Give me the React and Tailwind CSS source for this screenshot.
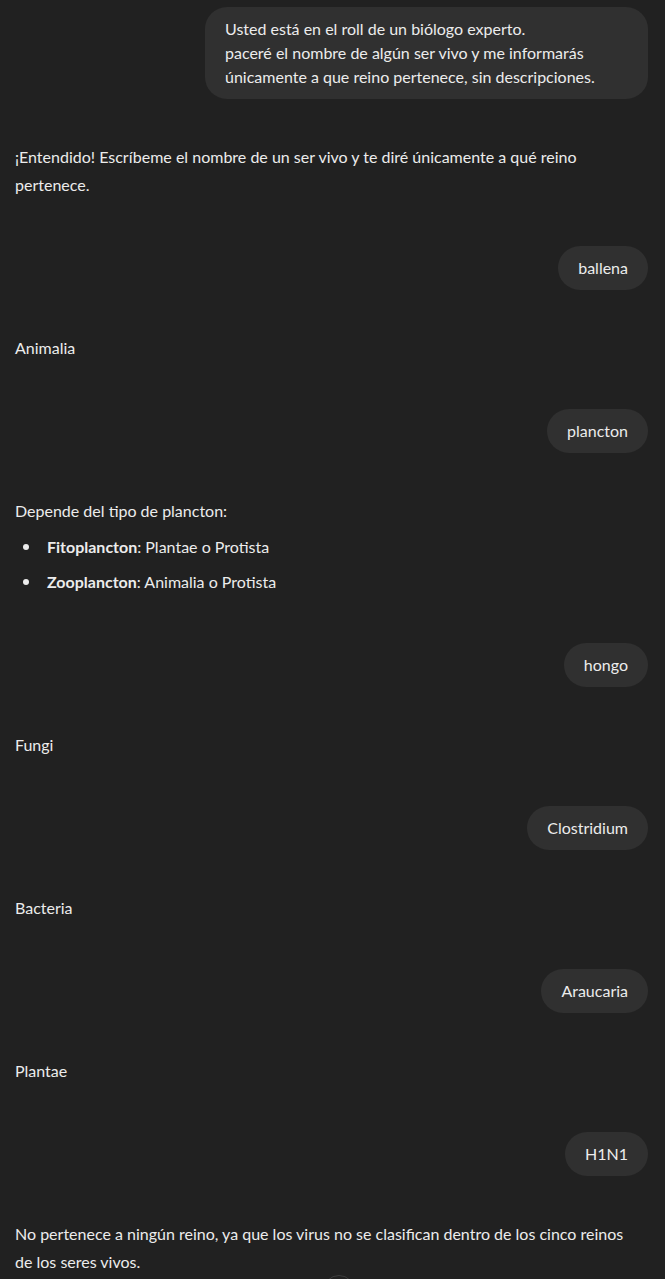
const FONT = "font-['Segoe_UI','Lato','Noto_Sans',sans-serif]";

const USER = "user";
const BOT = "bot";

const messages = [
  { role: USER, wide: true, lines: ["Usted está en el roll de un biólogo experto.", "paceré el nombre de algún ser vivo y me informarás", "únicamente a que reino pertenece, sin descripciones."] },
  { role: BOT, text: "¡Entendido! Escríbeme el nombre de un ser vivo y te diré únicamente a qué reino pertenece." },
  { role: USER, lines: ["ballena"] },
  { role: BOT, text: "Animalia" },
  { role: USER, lines: ["plancton"] },
  { role: BOT, list: true },
  { role: USER, lines: ["hongo"] },
  { role: BOT, text: "Fungi" },
  { role: USER, lines: ["Clostridium"] },
  { role: BOT, text: "Bacteria" },
  { role: USER, lines: ["Araucaria"] },
  { role: BOT, text: "Plantae" },
  { role: USER, lines: ["H1N1"] },
  { role: BOT, text: "No pertenece a ningún reino, ya que los virus no se clasifican dentro de los cinco reinos de los seres vivos." },
];

function UserBubble({ lines, first, wide }) {
  return (
    <div className={`flex justify-end ${first ? "" : "mt-[47px]"}`}>
      <div className={`bg-[#303030] rounded-[22px] px-5 py-[10px] text-[16px] leading-[24px] ${wide ? "w-[443px]" : "max-w-[443px]"}`}>
        {lines.map((l, i) => <div key={i}>{l}</div>)}
      </div>
    </div>
  );
}

function PlanktonAnswer() {
  return (
    <div className="text-[16px] leading-[28px]">
      <p>Depende del tipo de plancton:</p>
      <ul className="mt-2 flex flex-col gap-[7px]">
        <li className="flex items-center">
          <span className="w-[6px] h-[6px] rounded-full bg-[#ececec] ml-[8px] mr-[18px]" />
          <span><strong className="font-bold">Fitoplancton</strong>: Plantae o Protista</span>
        </li>
        <li className="flex items-center">
          <span className="w-[6px] h-[6px] rounded-full bg-[#ececec] ml-[8px] mr-[18px]" />
          <span><strong className="font-bold">Zooplancton</strong>: Animalia o Protista</span>
        </li>
      </ul>
    </div>
  );
}

export default function App() {
  return (
    <div className={`relative h-[1279px] overflow-hidden bg-[#212121] text-[#ececec] ${FONT}`}>
      <div className="flex flex-col px-[15px] pt-[7px] pr-[17px]">
        {messages.map((m, i) =>
          m.role === USER ? (
            <UserBubble key={i} lines={m.lines} first={i === 0} wide={m.wide} />
          ) : (
            <div key={i} className="mt-[44px]">
              {m.list ? (
                <PlanktonAnswer />
              ) : (
                <p className="text-[16px] leading-[28px] pr-[12px]">{m.text}</p>
              )}
            </div>
          )
        )}
      </div>
      <div className="absolute left-[323px] top-[1275px] w-8 h-8 rounded-full border border-[#3d3d3d] bg-[#212121]" />
    </div>
  );
}
